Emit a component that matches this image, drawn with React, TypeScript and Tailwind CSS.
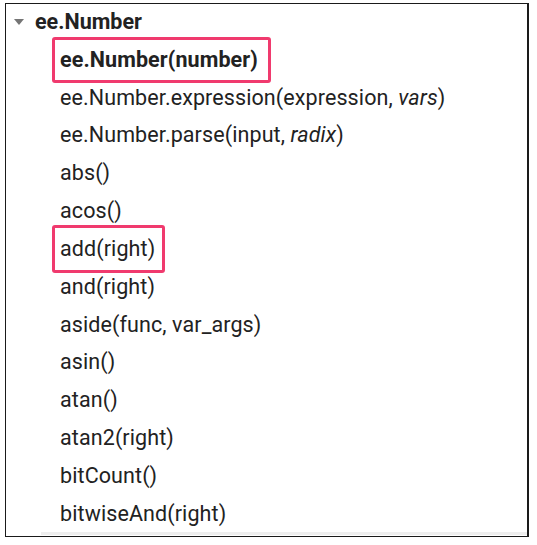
import React from 'react';

const rows: { name: string; args?: React.ReactNode; box?: boolean; bold?: boolean }[] = [
  { name: 'ee.Number(number)', bold: true, box: true },
  { name: 'ee.Number.expression(expression, ', args: <><i>vars</i>)</> },
  { name: 'ee.Number.parse(input, ', args: <><i>radix</i>)</> },
  { name: 'abs()' },
  { name: 'acos()' },
  { name: 'add(right)', box: true },
  { name: 'and(right)' },
  { name: 'aside(func, var_args)' },
  { name: 'asin()' },
  { name: 'atan()' },
  { name: 'atan2(right)' },
  { name: 'bitCount()' },
  { name: 'bitwiseAnd(right)' },
];

export default function App() {
  return (
    <div className="w-[537px] h-[545px] bg-white pt-[3px] pl-[5px] font-['Roboto',sans-serif] text-[#222222]">
      <div className="relative w-[524px] h-[534px] border border-r-2 border-[#1a1a1a] overflow-hidden">
        <div className="flex items-center h-[36px] pl-[8px]">
          <svg width="10" height="6" viewBox="0 0 10 6" className="mr-[11px]">
            <path d="M0 0 L10 0 L5 6 Z" fill="#757575" />
          </svg>
          <span className="text-[21.5px] font-bold">ee.Number</span>
        </div>
        <div className="pt-[1px]">
          {rows.map((r, i) => (
            <div key={i} className="flex items-center h-[37.83px] pl-[54px] text-[21.5px] tracking-[0.1px] whitespace-nowrap">
              {r.box ? (
                <span
                  className={`flex items-center border-[3px] border-[#f03a6e] rounded-[3px] -ml-[8px] pl-[5px] ${
                    r.bold ? 'h-[46px] font-bold pr-[10px]' : 'h-[48px] pr-[7px]'
                  }`}
                >
                  {r.name}
                </span>
              ) : (
                <span>
                  {r.name}
                  {r.args}
                </span>
              )}
            </div>
          ))}
        </div>
        <div className="absolute left-[35px] right-0 bottom-[1px] h-[3px] bg-[#eeeeee]" />
      </div>
    </div>
  );
}
